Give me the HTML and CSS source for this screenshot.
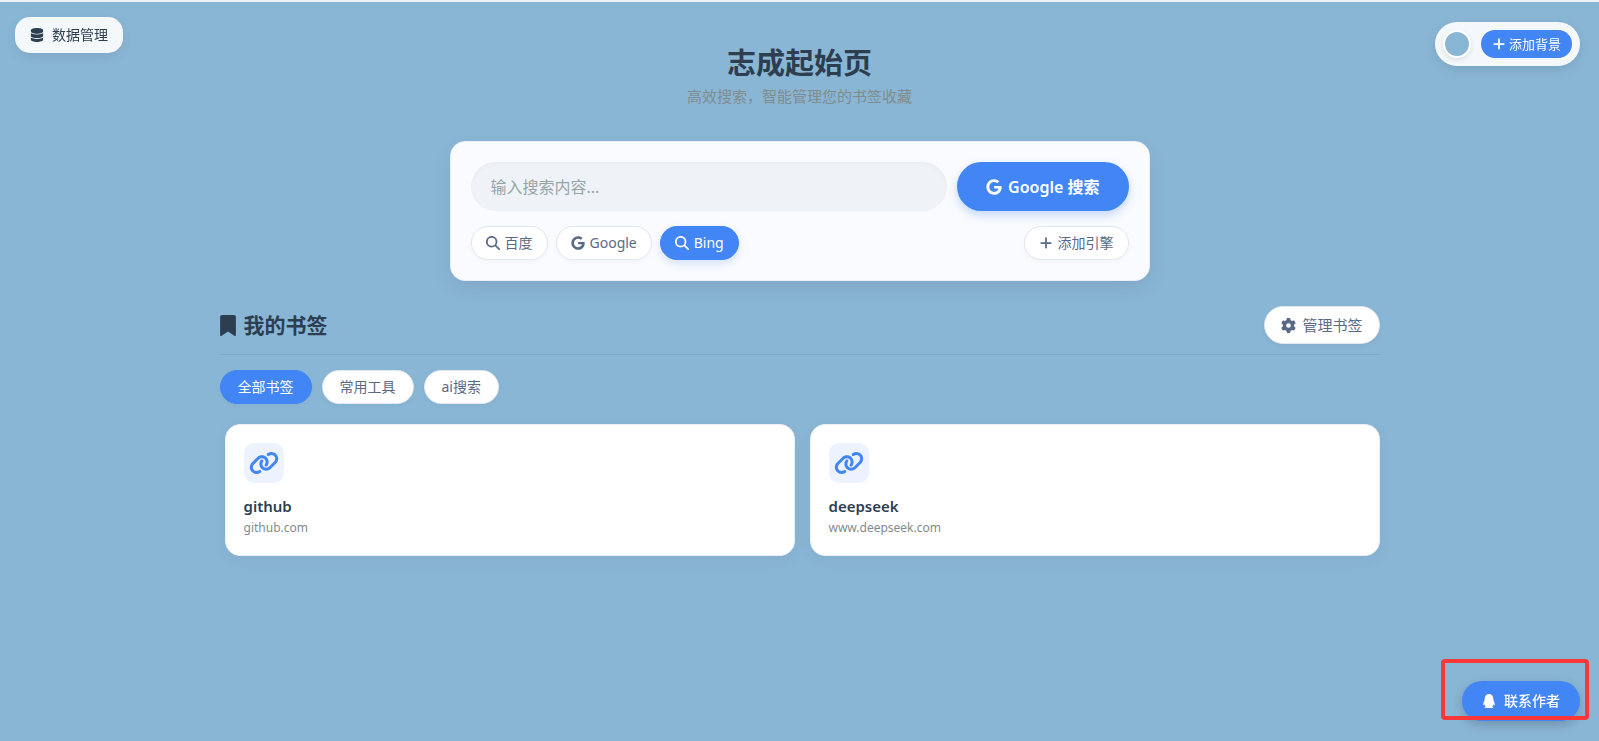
FILE: index.html
```html
<!DOCTYPE html>
<html lang="zh-CN">
<head>
    <meta charset="UTF-8">
    <meta name="viewport" content="width=device-width, initial-scale=1.0">
    <title>志成起始页</title>
    <link rel="stylesheet" href="styles.css">
</head>
<body>
    <!-- 图标 -->
    <svg class="sprite" aria-hidden="true">
        <symbol id="i-database" viewBox="0 0 448 512"><path d="M448 80v48c0 44.2-100.3 80-224 80S0 172.2 0 128V80C0 35.8 100.3 0 224 0S448 35.8 448 80zM393.2 214.7c20.8-7.4 39.9-16.9 54.8-28.6V288c0 44.2-100.3 80-224 80S0 332.2 0 288V186.1c14.9 11.8 34 21.2 54.8 28.6C99.7 230.7 159.5 240 224 240s124.3-9.3 169.2-25.3zM0 346.1c14.9 11.8 34 21.2 54.8 28.6C99.7 390.7 159.5 400 224 400s124.3-9.3 169.2-25.3c20.8-7.4 39.9-16.9 54.8-28.6V432c0 44.2-100.3 80-224 80S0 476.2 0 432V346.1z"/></symbol>
        <symbol id="i-plus" viewBox="0 0 448 512"><path d="M256 80c0-17.7-14.3-32-32-32s-32 14.3-32 32V224H48c-17.7 0-32 14.3-32 32s14.3 32 32 32H192V432c0 17.7 14.3 32 32 32s32-14.3 32-32V288H400c17.7 0 32-14.3 32-32s-14.3-32-32-32H256V80z"/></symbol>
        <symbol id="i-google" viewBox="0 0 488 512"><path d="M488 261.8C488 403.3 391.1 504 248 504 110.8 504 0 393.2 0 256S110.8 8 248 8c66.8 0 123 24.5 166.3 64.9l-67.5 64.9C258.5 52.6 94.3 116.6 94.3 256c0 86.5 69.1 156.6 153.7 156.6 98.2 0 135-70.4 140.8-106.9H248v-85.3h236.1c2.3 12.7 3.9 24.9 3.9 41.4z"/></symbol>
        <symbol id="i-search" viewBox="0 0 512 512"><path d="M416 208c0 45.9-14.9 88.3-40 122.7L502.6 457.4c12.5 12.5 12.5 32.8 0 45.3s-32.8 12.5-45.3 0L330.7 376c-34.4 25.2-76.8 40-122.7 40C93.1 416 0 322.9 0 208S93.1 0 208 0S416 93.1 416 208zM208 352a144 144 0 1 0 0-288 144 144 0 1 0 0 288z"/></symbol>
        <symbol id="i-bookmark" viewBox="0 0 384 512"><path d="M0 48V487.7C0 501.1 10.9 512 24.3 512c5 0 9.9-1.5 14-4.4L192 400 345.7 507.6c4.1 2.9 9 4.4 14 4.4c13.4 0 24.3-10.9 24.3-24.3V48c0-26.5-21.5-48-48-48H48C21.5 0 0 21.5 0 48z"/></symbol>
        <symbol id="i-cog" viewBox="0 0 512 512"><path d="M495.9 166.6c3.2 8.7 .5 18.4-6.4 24.6l-43.3 39.4c1.1 8.3 1.7 16.8 1.7 25.4s-.6 17.1-1.7 25.4l43.3 39.4c6.9 6.2 9.6 15.9 6.4 24.6c-4.4 11.9-9.7 23.3-15.8 34.3l-4.7 8.1c-6.6 11-14 21.4-22.1 31.2c-5.9 7.2-15.7 9.6-24.5 6.8l-55.7-17.7c-13.4 10.3-28.2 18.9-44 25.4l-12.5 57.1c-2 9.1-9 16.3-18.2 17.8c-13.8 2.3-28 3.5-42.5 3.5s-28.7-1.2-42.5-3.5c-9.2-1.5-16.2-8.7-18.2-17.8l-12.5-57.1c-15.8-6.5-30.6-15.1-44-25.4L83.1 425.9c-8.8 2.8-18.6 .3-24.5-6.8c-8.1-9.8-15.5-20.2-22.1-31.2l-4.7-8.1c-6.1-11-11.4-22.4-15.8-34.3c-3.2-8.7-.5-18.4 6.4-24.6l43.3-39.4C64.6 273.1 64 264.6 64 256s.6-17.1 1.7-25.4L22.4 191.2c-6.9-6.2-9.6-15.9-6.4-24.6c4.4-11.9 9.7-23.3 15.8-34.3l4.7-8.1c6.6-11 14-21.4 22.1-31.2c5.9-7.2 15.7-9.6 24.5-6.8l55.7 17.7c13.4-10.3 28.2-18.9 44-25.4l12.5-57.1c2-9.1 9-16.3 18.2-17.8C227.3 1.2 241.5 0 256 0s28.7 1.2 42.5 3.5c9.2 1.5 16.2 8.7 18.2 17.8l12.5 57.1c15.8 6.5 30.6 15.1 44 25.4l55.7-17.7c8.8-2.8 18.6-.3 24.5 6.8c8.1 9.8 15.5 20.2 22.1 31.2l4.7 8.1c6.1 11 11.4 22.4 15.8 34.3zM256 336a80 80 0 1 0 0-160 80 80 0 1 0 0 160z"/></symbol>
        <symbol id="i-link" viewBox="0 0 640 512"><path d="M579.8 267.7c56.5-56.5 56.5-148 0-204.5c-50-50-128.8-56.5-186.3-15.4l-1.6 1.1c-14.4 10.3-17.7 30.3-7.4 44.6s30.3 17.7 44.6 7.4l1.6-1.1c32.1-22.9 76-19.3 103.8 8.6c31.5 31.5 31.5 82.5 0 114L422.3 334.8c-31.5 31.5-82.5 31.5-114 0c-27.9-27.9-31.5-71.8-8.6-103.8l1.1-1.6c10.3-14.4 6.9-34.4-7.4-44.6s-34.4-6.9-44.6 7.4l-1.1 1.6C206.5 251.2 213 330 263 380c56.5 56.5 148 56.5 204.5 0L579.8 267.7zM60.2 244.3c-56.5 56.5-56.5 148 0 204.5c50 50 128.8 56.5 186.3 15.4l1.6-1.1c14.4-10.3 17.7-30.3 7.4-44.6s-30.3-17.7-44.6-7.4l-1.6 1.1c-32.1 22.9-76 19.3-103.8-8.6C74 372 74 321 105.5 289.5L217.7 177.2c31.5-31.5 82.5-31.5 114 0c27.9 27.9 31.5 71.8 8.6 103.9l-1.1 1.6c-10.3 14.4-6.9 34.4 7.4 44.6s34.4 6.9 44.6-7.4l1.1-1.6C433.5 260.8 427 182 377 132c-56.5-56.5-148-56.5-204.5 0L60.2 244.3z"/></symbol>
        <symbol id="i-qq" viewBox="0 0 448 512"><path d="M433.754 420.445c-11.526 1.393-44.86-52.741-44.86-52.741 0 31.345-16.136 72.247-51.051 101.786 16.842 5.192 54.843 19.167 45.803 34.421-7.316 12.343-125.51 7.881-159.632 4.037-34.122 3.844-152.316 8.306-159.632-4.037-9.045-15.25 28.918-29.214 45.783-34.415-34.92-29.539-51.059-70.445-51.059-101.792 0 0-33.334 54.134-44.859 52.741-5.37-.65-12.424-29.644 9.347-99.704 10.261-33.024 21.995-60.478 40.144-105.779C60.683 98.063 108.982.006 224 0c113.737.006 163.156 96.133 160.264 214.963 18.118 45.223 29.912 72.85 40.144 105.778 21.768 70.06 14.716 99.053 9.346 99.704z"/></symbol>
    </svg>

    <button type="button" class="data-btn"><svg class="icon"><use href="#i-database"/></svg>数据管理</button>

    <div class="bg-panel">
        <button type="button" class="bg-color" aria-label="背景颜色"></button>
        <button type="button" class="bg-add"><svg class="icon"><use href="#i-plus"/></svg>添加背景</button>
    </div>

    <div class="container">
        <header>
            <h1>志成起始页</h1>
            <p class="subtitle">高效搜索，智能管理您的书签收藏</p>
        </header>

        <!-- 搜索 -->
        <section class="search-card">
            <form class="search-form">
                <input type="text" class="search-input" placeholder="输入搜索内容..." aria-label="搜索内容">
                <button type="submit" class="search-btn"><svg class="icon"><use href="#i-google"/></svg>Google 搜索</button>
            </form>
            <div class="engines">
                <button type="button" class="pill"><svg class="icon"><use href="#i-search"/></svg>百度</button>
                <button type="button" class="pill"><svg class="icon"><use href="#i-google"/></svg>Google</button>
                <button type="button" class="pill active"><svg class="icon"><use href="#i-search"/></svg>Bing</button>
                <button type="button" class="pill add-engine"><svg class="icon"><use href="#i-plus"/></svg>添加引擎</button>
            </div>
        </section>

        <!-- 书签 -->
        <section class="bookmarks">
            <div class="section-header">
                <h2><svg class="icon"><use href="#i-bookmark"/></svg>我的书签</h2>
                <button type="button" class="manage-btn"><svg class="icon"><use href="#i-cog"/></svg>管理书签</button>
            </div>
            <div class="tabs">
                <button type="button" class="tab active">全部书签</button>
                <button type="button" class="tab">常用工具</button>
                <button type="button" class="tab">ai搜索</button>
            </div>
            <div class="grid">
                <a class="card" href="https://github.com">
                    <span class="card-icon"><svg class="icon"><use href="#i-link"/></svg></span>
                    <span class="card-title">github</span>
                    <span class="card-url">github.com</span>
                </a>
                <a class="card" href="https://www.deepseek.com">
                    <span class="card-icon"><svg class="icon"><use href="#i-link"/></svg></span>
                    <span class="card-title">deepseek</span>
                    <span class="card-url">www.deepseek.com</span>
                </a>
            </div>
        </section>
    </div>

    <button type="button" class="contact-btn"><svg class="icon"><use href="#i-qq"/></svg>联系作者</button>
    <div class="highlight"></div>
</body>
</html>
```
FILE: styles.css
```css
:root {
    --primary: #4285f4;
    --bg: #8ab6d6;
    --dark: #2c3e50;
    --text: #5a6a85;
    --gray: #7f8c8d;
    --border: #e1e7ef;
}

* {
    box-sizing: border-box;
    margin: 0;
    padding: 0;
}

body {
    font-family: 'Segoe UI', 'Noto Sans', 'Noto Sans CJK SC', sans-serif;
    background-color: var(--bg);
    color: var(--dark);
    min-height: 100vh;
    border-top: 2px solid #f0f3f5;
}

button,
input {
    font-family: inherit;
    border: none;
}

button {
    display: inline-flex;
    align-items: center;
    justify-content: center;
    gap: 6px;
    line-height: 20px;
    white-space: nowrap;
    cursor: pointer;
}

.sprite {
    display: none;
}

.icon {
    width: 14px;
    height: 14px;
    fill: currentColor;
    flex-shrink: 0;
}

.container {
    max-width: 1200px;
    margin: 0 auto;
    padding: 40px 20px;
}

header {
    text-align: center;
    margin-bottom: 32px;
}

h1 {
    font-size: 29px;
    line-height: 42px;
    font-weight: 700;
}

.subtitle {
    font-size: 15px;
    line-height: 25px;
    color: var(--gray);
}

/* 左上角 */
.data-btn {
    position: fixed;
    top: 17px;
    left: 15px;
    height: 36px;
    padding: 0 15px;
    gap: 8px;
    border-radius: 15px;
    background: rgba(255, 255, 255, 0.9);
    color: var(--dark);
    font-size: 14px;
    box-shadow: 0 4px 12px rgba(0, 0, 0, 0.08);
}

/* 右上角 */
.bg-panel {
    position: fixed;
    top: 22px;
    right: 19px;
    display: flex;
    align-items: center;
    gap: 10px;
    padding: 8px;
    border-radius: 30px;
    background: rgba(255, 255, 255, 0.9);
    box-shadow: 0 4px 12px rgba(0, 0, 0, 0.1);
}

.bg-color {
    width: 28px;
    height: 28px;
    border: 2px solid #fff;
    border-radius: 50%;
    background: var(--bg);
    box-shadow: 0 2px 5px rgba(0, 0, 0, 0.1);
}

.bg-add {
    height: 28px;
    padding: 0 11px;
    gap: 3px;
    border-radius: 20px;
    background: var(--primary);
    color: #fff;
    font-size: 13px;
}

/* 搜索 */
.search-card {
    max-width: 700px;
    margin: 0 auto 25px;
    padding: 20px;
    border: 1px solid #e9eff4;
    border-radius: 15px;
    background: #fafbfe;
    box-shadow: 0 8px 20px rgba(0, 0, 0, 0.08);
}

.search-form {
    display: flex;
    gap: 10px;
    margin-bottom: 15px;
}

.search-input {
    flex: 1;
    min-width: 0;
    height: 49px;
    padding: 0 20px;
    border-radius: 25px;
    background: #eff3f8;
    color: var(--dark);
    font-size: 16px;
    outline: none;
    box-shadow: inset 0 2px 5px rgba(0, 0, 0, 0.03);
}

.search-input::placeholder {
    color: #95a5a6;
}

.search-btn {
    padding: 0 29px;
    border-radius: 25px;
    background: var(--primary);
    color: #fff;
    font-size: 16px;
    font-weight: 600;
    box-shadow: 0 4px 10px rgba(66, 133, 244, 0.3);
}

.search-btn .icon {
    width: 16px;
    height: 16px;
}

.engines {
    display: flex;
    flex-wrap: wrap;
    gap: 8px;
}

.pill {
    height: 34px;
    padding: 0 14px;
    gap: 5px;
    border: 1px solid var(--border);
    border-radius: 20px;
    background: #fff;
    color: var(--text);
    font-size: 14px;
    box-shadow: 0 2px 5px rgba(0, 0, 0, 0.03);
}

.pill.active {
    border-color: var(--primary);
    background: var(--primary);
    color: #fff;
    box-shadow: 0 4px 8px rgba(66, 133, 244, 0.2);
}

.add-engine {
    margin-left: auto;
}

/* 书签 */
.section-header {
    display: flex;
    align-items: center;
    justify-content: space-between;
    padding-bottom: 10px;
    margin-bottom: 15px;
    border-bottom: 1px solid #7ba8c8;
}

h2 {
    display: flex;
    align-items: center;
    gap: 8px;
    font-size: 21px;
    line-height: 30px;
}

h2 .icon {
    width: 16px;
    height: 21px;
}

.manage-btn {
    height: 38px;
    padding: 0 16px;
    border: 1px solid var(--border);
    border-radius: 20px;
    background: #fff;
    color: var(--text);
    font-size: 15px;
    box-shadow: 0 2px 5px rgba(0, 0, 0, 0.05);
}

.manage-btn .icon {
    width: 15px;
    height: 15px;
}

.tabs {
    display: flex;
    gap: 10px;
    margin-bottom: 20px;
}

.tab {
    height: 34px;
    padding: 0 17px;
    border: 1px solid var(--border);
    border-radius: 20px;
    background: #fff;
    color: var(--text);
    font-size: 14px;
    box-shadow: 0 2px 5px rgba(0, 0, 0, 0.03);
}

.tab.active {
    border-color: var(--primary);
    background: var(--primary);
    color: #fff;
}

.grid {
    display: grid;
    grid-template-columns: repeat(auto-fit, minmax(400px, 1fr));
    gap: 15px;
    padding-left: 5px;
}

.card {
    display: flex;
    flex-direction: column;
    padding: 18px;
    border: 1px solid #edf1f7;
    border-radius: 15px;
    background: #fff;
    color: var(--dark);
    text-decoration: none;
    box-shadow: 0 5px 15px rgba(0, 0, 0, 0.05);
}

.card-icon {
    display: flex;
    align-items: center;
    justify-content: center;
    width: 40px;
    height: 40px;
    margin-bottom: 10px;
    border-radius: 10px;
    background: #ecf3fe;
    color: var(--primary);
}

.card-icon .icon {
    width: 30px;
    height: 24px;
}

.card-title {
    font-size: 15px;
    line-height: 26px;
    font-weight: 600;
}

.card-url {
    font-size: 12px;
    line-height: 18px;
    color: var(--gray);
}

/* 右下角 */
.contact-btn {
    position: fixed;
    right: 19px;
    bottom: 20px;
    height: 40px;
    padding: 0 20px;
    gap: 8px;
    border-radius: 30px;
    background: var(--primary);
    color: #fff;
    font-size: 14px;
    font-weight: 500;
    box-shadow: 0 4px 12px rgba(0, 0, 0, 0.2);
}

.highlight {
    position: fixed;
    right: 10px;
    bottom: 21px;
    width: 148px;
    height: 61px;
    border: 4px solid #fb3838;
    border-radius: 4px;
    pointer-events: none;
}
```
